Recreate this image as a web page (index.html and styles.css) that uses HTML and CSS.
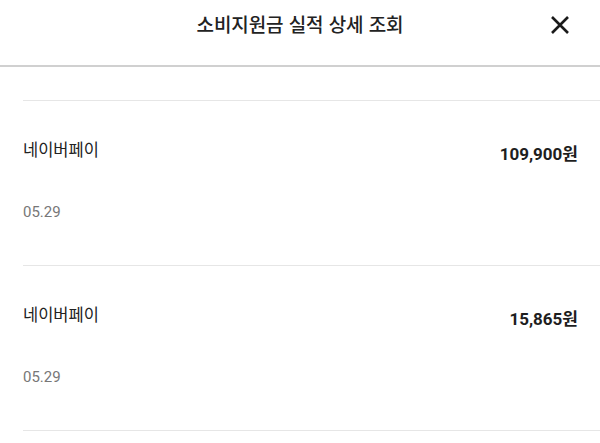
FILE: index.html
```html
<!DOCTYPE html>
<html lang="ko">
<head>
<meta charset="utf-8">
<link rel="stylesheet" href="styles.css">
</head>
<body>
<div class="page">
  <header class="header">
    <h1 class="title">소비지원금 실적 상세 조회</h1>
    <button class="close" aria-label="닫기">
      <svg width="20" height="20" viewBox="0 0 20 20"><path d="M2 2 L18 18 M18 2 L2 18" stroke="#1a1a1a" stroke-width="2.6" stroke-linecap="butt"/></svg>
    </button>
  </header>
  <div class="spacer"></div>
  <ul class="list">
    <li class="item">
      <div class="top">
        <span class="name">네이버페이</span>
        <span class="amount">109,900원</span>
      </div>
      <div class="date">05.29</div>
    </li>
    <li class="item">
      <div class="top">
        <span class="name">네이버페이</span>
        <span class="amount">15,865원</span>
      </div>
      <div class="date">05.29</div>
    </li>
  </ul>
</div>
</body>
</html>
```

FILE: styles.css
```css
* { box-sizing: border-box; }
html, body {
  margin: 0;
  padding: 0;
  background: #fff;
  font-family: Roboto, "Noto Sans CJK KR", sans-serif;
  color: #222;
}
.page { width: 600px; overflow: hidden; }
.header {
  height: 67px;
  border-bottom: 2px solid #d0d0d0;
  display: flex;
  justify-content: center;
  position: relative;
}
.title {
  margin: 0;
  font-family: "Noto Sans CJK KR", sans-serif;
  font-size: 19px;
  font-weight: 500;
  line-height: 48px;
  color: #222;
  letter-spacing: -0.1px;
}
.close {
  position: absolute;
  right: 30px;
  top: 15px;
  width: 20px;
  height: 20px;
  padding: 0;
  border: 0;
  background: none;
  display: flex;
}
.spacer { height: 33px; }
.list {
  list-style: none;
  margin: 0 0 0 23px;
  padding: 0;
  border-bottom: 1px solid #e6e6e6;
}
.item {
  border-top: 1px solid #e6e6e6;
  padding: 38px 22px 43px 0;
}
.top {
  display: flex;
  justify-content: space-between;
  align-items: center;
  height: 24px;
}
.name {
  font-family: "Noto Sans CJK KR", sans-serif;
  font-size: 16.5px;
  line-height: 24px;
  color: #222;
  padding-bottom: 4px;
}
.amount {
  font-family: Roboto, "Noto Sans CJK KR", sans-serif;
  font-size: 17px;
  font-weight: 700;
  line-height: 24px;
  color: #1e1e1e;
  padding-top: 6px;
}
.date {
  margin-top: 39px;
  font-family: Roboto, sans-serif;
  font-size: 15px;
  line-height: 20px;
  color: #777;
}
```
